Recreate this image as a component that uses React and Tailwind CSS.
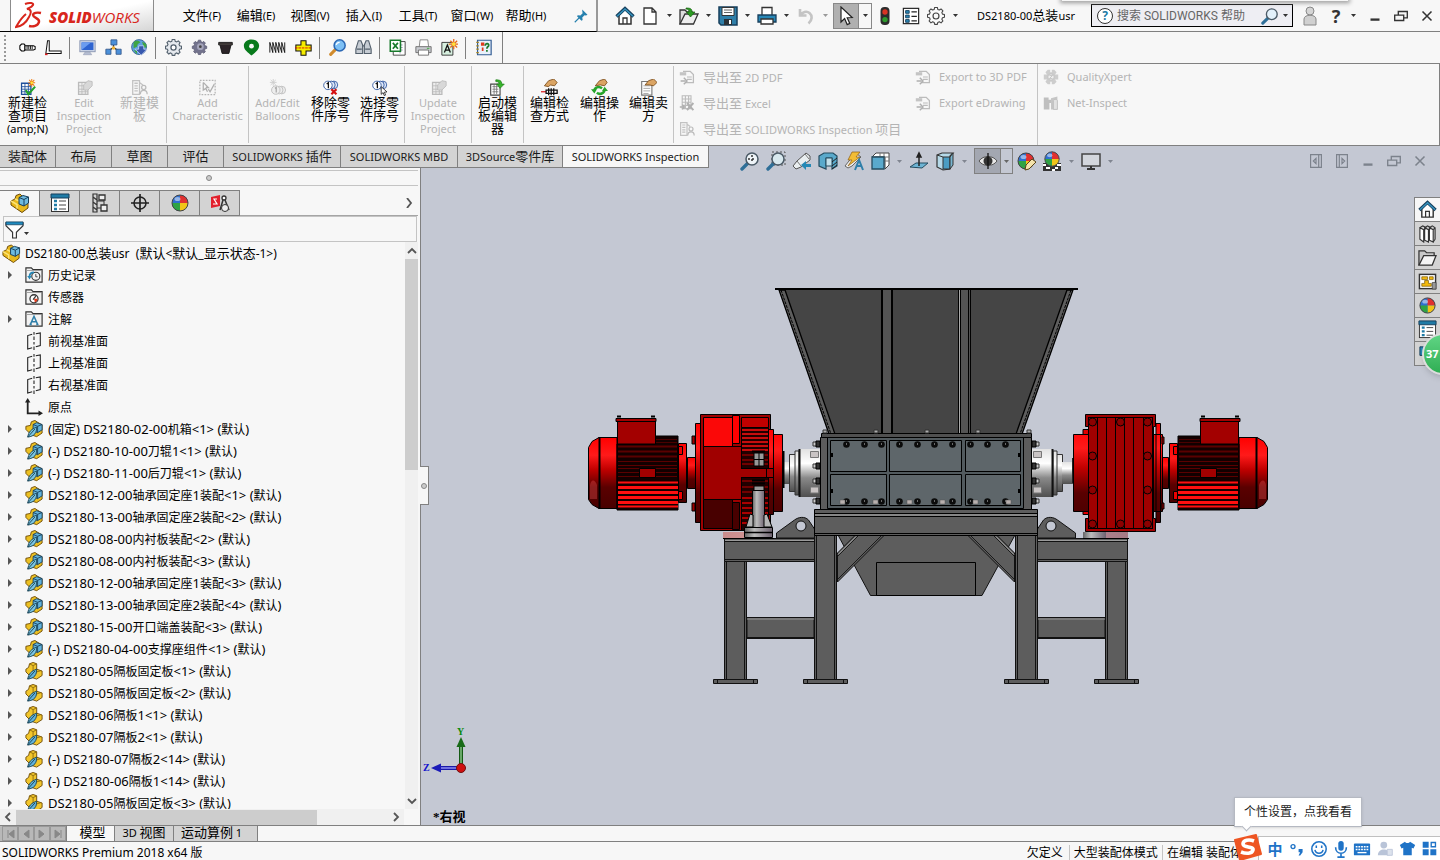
import { Fragment } from "react";
import clsx from "clsx";

const CJK = /([\u3000-\u9fff\uff00-\uffef]+)/;

// Chinese glyphs and latin letters use different sizes in the same label
function Mixed({ text, cjk = "text-[13px]" }) {
  return text.split(CJK).map((part, i) =>
    i % 2 ? (
      <span key={i} className={cjk}>{part}</span>
    ) : (
      <Fragment key={i}>{part}</Fragment>
    )
  );
}

function Svg({ size = 20, children, className }) {
  return (
    <svg width={size} height={size} viewBox="0 0 20 20" fill="none" className={clsx("shrink-0", className)} aria-hidden="true">
      {children}
    </svg>
  );
}

function Caret({ color = "#333" }) {
  return (
    <svg width="5" height="3" viewBox="0 0 5 3" className="shrink-0" aria-hidden="true">
      <path d="M0 0h5L2.5 3z" fill={color} />
    </svg>
  );
}

/* ---------- icons ---------- */

const gearTeeth = "M8.5 1.5h3l.5 2.2 1.7.7 1.9-1.2 2.1 2.1-1.2 1.9.7 1.7 2.2.5v3l-2.2.5-.7 1.7 1.2 1.9-2.1 2.1-1.9-1.2-1.7.7-.5 2.2h-3L8 18.1l-1.7-.7-1.9 1.2-2.1-2.1 1.2-1.9-.7-1.7L.6 12.4v-3l2.2-.5.7-1.7-1.2-1.9 2.1-2.1 1.9 1.2 1.7-.7z";

const Ball = () => (
  <>
    <circle cx="10" cy="10" r="8" fill="#2f6fd0" />
    <path d="M10 10V2a8 8 0 0 1 8 8z" fill="#e03030" />
    <path d="M10 10h8a8 8 0 0 1-8 8z" fill="#f0c419" />
    <path d="M10 10v8a8 8 0 0 1-8-8z" fill="#2fa344" />
    <circle cx="10" cy="10" r="8" stroke="#444" strokeWidth="1" />
    <ellipse cx="7.5" cy="6" rx="3" ry="2" fill="#fff" opacity=".5" />
  </>
);

const House = () => (
  <>
    <path d="M4 9v9h12V9l-6-6z" fill="#fff" stroke="#333" strokeWidth="1.5" />
    <path d="M1.5 10.5L10 2.5l8.5 8" stroke="#173f5c" strokeWidth="3.4" />
    <path d="M2 10.3L10 2.9l8 7.4" stroke="#3592bd" strokeWidth="1.5" />
    <path d="M8 18v-6h4v6" stroke="#333" strokeWidth="1.3" />
  </>
);

const ListPane = () => (
  <>
    <rect x="1.5" y="1.5" width="17" height="17" fill="#fff" stroke="#333" />
    <path d="M1 1h18v4H1z" fill="#1f7ba6" stroke="#173f5c" />
    <path d="M4 8h3M4 12h3M4 16h3" stroke="#1f7ba6" strokeWidth="2.4" />
    <path d="M9 8h7M9 12h7M9 16h7" stroke="#444" />
  </>
);

const Lens = ({ fill = "#d8ecf8" }) => (
  <>
    <path d="M2 18l6-6" stroke="#2f6f98" strokeWidth="3.4" strokeLinecap="round" />
    <circle cx="12" cy="8" r="6" fill={fill} stroke="#4b5a66" strokeWidth="1.5" />
  </>
);

const FolderBack = () => (
  <>
    <path d="M1 18V2h6l2 2h10v14z" fill="#f2f2f2" stroke="#333" strokeWidth="1.3" />
    <path d="M1 5h17" stroke="#999" />
  </>
);

const Coins = () => (
  <>
    <circle cx="14" cy="7" r="4.5" fill="#dfe8f8" stroke="#27509c" />
    <circle cx="11" cy="7" r="4.5" fill="#dfe8f8" stroke="#27509c" />
    <circle cx="7" cy="7.5" r="5" fill="#fff" stroke="#27509c" />
    <path d="M5.5 6l2-1.5V11" stroke="#111" strokeWidth="1.5" />
  </>
);

const icons = {
  home: <House />,
  newDoc: <path d="M4 2h8l4 4v12H4zM12 2v4h4" fill="#fff" stroke="#333" strokeWidth="1.3" />,
  open: (
    <>
      <path d="M1 18V4h5l2 2h5v3" fill="#ddd" stroke="#333" strokeWidth="1.3" />
      <path d="M1 18L6 8h13l-4.500 10z" fill="#eee" stroke="#333" strokeWidth="1.3" />
      <path d="M7 2c5 0 6 1 6 4h3l-4.500 5L7.500 6H10c0-2-1-3-3-3z" fill="#2b9b22" stroke="#176010" strokeWidth=".7" />
    </>
  ),
  save: (
    <>
      <path d="M1 1h18v18H3l-2-2z" fill="#2f7fa9" stroke="#173f5c" strokeWidth="1.5" />
      <path d="M4 1.500h12v8H4z" fill="#fff" stroke="#333" />
      <path d="M6 4h8M6 6.500h8" stroke="#666" />
      <path d="M6 13h8v6H6z" fill="#2b3238" />
      <path d="M11 14h2v4h-2z" fill="#fff" />
    </>
  ),
  print: (
    <>
      <path d="M5 9V1.500h10V9" fill="#fff" stroke="#333" strokeWidth="1.3" />
      <path d="M1 9h18v7H1z" fill="#2787b6" stroke="#173f5c" strokeWidth="1.3" />
      <path d="M4 13h12v5H4z" fill="#fff" stroke="#333" strokeWidth="1.3" />
    </>
  ),
  undo: <path d="M4 3v6.500h6.500M4.500 9c2-3 6-4.500 9-2s3 7-1 10.500" stroke="#c4c4c4" strokeWidth="2.6" />,
  cursor: <path d="M5 1v15l3.600-3.400 2.600 6 2.600-1.200-2.600-5.700 5-.2z" fill="#fff" stroke="#222" strokeWidth="1.2" />,
  light: (
    <>
      <rect x="5" y="0" width="10" height="20" rx="4.5" fill="#2c2c2c" />
      <circle cx="10" cy="5.500" r="3" fill="#d93423" />
      <circle cx="10" cy="14" r="3" fill="#2d9a2c" />
    </>
  ),
  options: (
    <>
      <rect x="1.5" y="1.5" width="17" height="17" fill="#fff" stroke="#222" strokeWidth="1.3" />
      <path d="M4 4h4v3H4zM4 9h4v3H4zM4 14h4v3H4z" fill="#2787b6" stroke="#173f5c" />
      <path d="M10.500 5.500h6M10.500 10.500h6M10.500 15.500h6" stroke="#222" strokeWidth="1.3" />
    </>
  ),
  gear: (
    <>
      <path d={gearTeeth} transform="translate(0 -1)" fill="#fafafa" stroke="#444" strokeWidth="1.2" strokeLinejoin="round" />
      <circle cx="10" cy="10" r="3.3" stroke="#444" strokeWidth="1.3" />
    </>
  ),
  gearGray: (
    <>
      <path d={gearTeeth} transform="translate(0 -1)" fill="#e5e9ee" stroke="#53606d" strokeWidth="1.3" />
      <circle cx="10" cy="10" r="3" fill="#fff" stroke="#53606d" strokeWidth="1.5" />
    </>
  ),
  gearDark: (
    <>
      <path d={gearTeeth} transform="translate(1 0) scale(.9)" fill="#73738d" stroke="#5a5a72" />
      <circle cx="11" cy="9" r="4" fill="#a4a4ba" />
      <circle cx="11" cy="9" r="1.6" fill="#444" />
    </>
  ),
  screw: (
    <>
      <path d="M3 6h3l1 1v6l-1 1H3l-2-2V8z" fill="#fff" stroke="#000" strokeWidth="1.2" />
      <path d="M7 8h10l2 1v3l-2 1H7z" fill="#fff" stroke="#000" strokeWidth="1.2" />
      <path d="M9.500 8v4M11.500 8v4M13.500 8v4M15.500 8v4" stroke="#000" />
    </>
  ),
  profile: (
    <>
      <path d="M3 2h2v12h14v3H1z" fill="#fff" stroke="#111" strokeWidth="1.2" />
      <path d="M0 18h3" stroke="#d22" strokeWidth="2" />
    </>
  ),
  monitor: (
    <>
      <rect x="1" y="2" width="18" height="13" fill="#cdd5e6" stroke="#8390ad" />
      <path d="M3 4h14v9H3z" fill="#2e63d0" />
      <path d="M3 13l11-9H3z" fill="#6b9cf0" />
      <path d="M5 18.500h10l-2-3H7z" fill="#b4bdd2" stroke="#8a94ad" strokeWidth=".6" />
    </>
  ),
  network: (
    <>
      <path d="M10 6v5M4 14l6-4 6 4" stroke="#333" strokeWidth="1.5" />
      <path d="M7 1h7v6H7zM1 12h6v6H1zM13 12h6v6h-6z" fill="#4a90da" stroke="#36588a" />
      <circle cx="10" cy="10.5" r="2" fill="#f2b233" />
    </>
  ),
  globe: (
    <>
      <circle cx="9.500" cy="9.500" r="8.800" fill="#5fa0e0" stroke="#335f91" />
      <path d="M3 4c3-3 7-2 8 0l-3 2-1 3-4 2zM13 3l5 3v4h-3zM3 13l4 1v4z" fill="#3fa544" />
      <path d="M9 8h6v4h4l-7 7-7-7h4z" fill="#3758ae" stroke="#dbe6fb" strokeWidth=".8" />
    </>
  ),
  belt: (
    <>
      <path d="M2 4h16v3h-1.500l-2.500 10H6L3.500 7H2z" fill="#2c2428" stroke="#111" />
      <path d="M2 6h16" stroke="#776" strokeWidth=".6" />
    </>
  ),
  pin: (
    <>
      <path d="M10 .5c5 0 9 3 9 7.500 0 5-5 8-9 11.500C6 16 1 13 1 8 1 3.500 5 .5 10 .5z" fill="#087a1c" />
      <circle cx="10" cy="8.500" r="2.800" fill="#f7f7f7" />
    </>
  ),
  spring: <path d="M1 16V4l3.500 12V4L8 16V4l3.500 12V4L15 16V4l3.500 12V4" stroke="#111" strokeWidth="1.1" />,
  cross: (
    <>
      <path d="M7 2h6v5h6v7h-6v5H7v-5H1V7h6z" fill="#f5ec00" stroke="#111" strokeWidth="1.2" />
      <path d="M0 10.500h20" stroke="#d00" strokeDasharray="3 1" />
    </>
  ),
  lensBlue: (
    <>
      <path d="M2 18l6-6" stroke="#d08b2d" strokeWidth="3.600" strokeLinecap="round" />
      <circle cx="12.500" cy="7.500" r="6.500" fill="#7dc0f5" stroke="#2c68b4" strokeWidth="1.8" />
      <path d="M8.500 7c.5-2 2-3 4-3" stroke="#fff" strokeWidth="1.5" />
    </>
  ),
  bino: (
    <>
      <path d="M4 2h3l2 5v10H1v-5zM16 2h-3l-2 5v10h8v-5z" fill="#c6ccd3" stroke="#525e6b" strokeWidth="1.3" />
      <path d="M2 12h6M12 12h6M9 8h2" stroke="#525e6b" strokeWidth="1.5" />
    </>
  ),
  excel: (
    <>
      <path d="M5 3h14v16H5z" fill="#fff" stroke="#333" />
      <path d="M10 7h6M10 10h6M10 13h6M13 4v13" stroke="#88a" />
      <path d="M1.500 1.500h12v13h-12z" fill="#fff" stroke="#187a2c" strokeWidth="1.8" />
      <path d="M4.500 4.500l6 7M10.500 4.500l-6 7" stroke="#187a2c" strokeWidth="2" />
    </>
  ),
  printer: (
    <>
      <path d="M5 9l1-8h9l1 8" fill="#fff" stroke="#777" />
      <path d="M1 9h18v7H1z" fill="#c9cbd0" stroke="#666" />
      <path d="M4 13h12v6H4z" fill="#fff" stroke="#666" />
      <path d="M14 11h3" stroke="#3a3" />
    </>
  ),
  noteStar: (
    <>
      <path d="M1 4h13v15H1z" fill="#d6efdf" stroke="#222" />
      <path d="M4 16l3.500-9L11 16M5.500 13h4" stroke="#111" strokeWidth="1.5" />
      <path d="M15 0v12M9 6h11M11 2l8 8M19 2l-8 8" stroke="#e86818" strokeWidth="1.5" />
      <circle cx="15" cy="6" r="2.200" fill="#ffe23a" />
    </>
  ),
  check: (
    <>
      <path d="M3 1.500h16v17H3z" fill="#e9f1fb" stroke="#325d94" strokeWidth="1.4" />
      <path d="M1.500 4h3M1.500 8h3M1.500 12h3M1.500 16h3" stroke="#a78421" strokeWidth="1.5" />
      <path d="M7 4h4v4H7zM8 10h2v4H8z" fill="#e03a1c" />
      <path d="M12 8c0-4 5-3 4 0-.5 1-2 1-2 3.500M14 13v2" stroke="#1c7a2b" strokeWidth="2" />
    </>
  ),
  grid: (
    <>
      <path d="M3 5h11v13H3z" fill="#fff" stroke="#1f4f9b" strokeWidth="1.5" />
      <path d="M3 9h11M3 12h11M3 15h11M7 5v13M11 5v13" stroke="#1f4f9b" />
      <path d="M8 13l3 5 8-9" stroke="#22a12c" strokeWidth="2.4" />
      <path d="M15 0v9M11 4.500h8M12 1l6 7M18 1l-6 7" stroke="#ef7d15" strokeWidth="1.2" />
      <circle cx="15" cy="4.500" r="1.600" fill="#ffe23a" />
    </>
  ),
  gridGray: (
    <>
      <path d="M3 4h11v14H3z" fill="#eee" stroke="#bbb" strokeWidth="1.5" />
      <path d="M3 8h11M3 12h11M3 15h11M7 4v14M11 4v14" stroke="#bbb" />
      <path d="M9 13V7l5-5 5 1v5l-5 5z" fill="#d8d8d8" stroke="#bbb" />
    </>
  ),
  peopleGray: (
    <>
      <path d="M2 2h8v16H2zM4 5h4M4 8h4M4 11h4M4 14h4M10 4l4 3" stroke="#c2c2c2" strokeWidth="1.5" />
      <circle cx="15" cy="10" r="2.5" stroke="#bbb" strokeWidth="1.5" />
      <path d="M11 18c0-6 8-6 8 0" stroke="#bbb" strokeWidth="1.5" />
    </>
  ),
  charGray: (
    <>
      <rect x="1" y="1.5" width="18" height="17" stroke="#b5b5b5" strokeWidth="1.5" strokeDasharray="2 1.5" />
      <path d="M5 4v9l3-2 2 4M5 4l6 6H8M11 12l2 3 5-9" stroke="#b0b0b0" strokeWidth="1.5" />
    </>
  ),
  balloonGray: (
    <>
      <path d="M5 0v8M1 4h8M2 1l6 6M8 1L2 7" stroke="#ccc" />
      <circle cx="15" cy="13" r="4.500" fill="#eee" stroke="#bbb" />
      <circle cx="12" cy="13" r="4.500" fill="#eee" stroke="#bbb" />
      <circle cx="8" cy="13" r="5" fill="#eee" stroke="#bbb" />
      <path d="M7 11l1.500-1v6" stroke="#aaa" strokeWidth="1.5" />
    </>
  ),
  balloonDel: (
    <>
      <Coins />
      <path d="M11 12l6 6M17 12l-6 6" stroke="#d41111" strokeWidth="2.6" />
    </>
  ),
  balloonSel: (
    <>
      <Coins />
      <path d="M12 9v9l2.300-2 1.300 3.500 1.500-.6-1.300-3.400 3-.3z" fill="#fff" stroke="#222" />
    </>
  ),
  launch: (
    <>
      <path d="M2 6h11v13H2z" fill="#fff" stroke="#444" strokeWidth="1.3" />
      <path d="M4 9h7M4 12h7M4 15h7M6 7v11M9 7v11" stroke="#777" />
      <path d="M8 1c5 0 7 1 7 5h3l-5 5-4-5h3c0-2-1-3-4-3z" fill="#38b52c" stroke="#1a7a14" strokeWidth=".8" />
    </>
  ),
  handProbe: (
    <>
      <path d="M4 8l5-6 6-2 4 4-3 4-5-1-2 2z" fill="#dba564" stroke="#7a4b1a" />
      <path d="M0 15h6" stroke="#d22" strokeWidth="1.5" />
      <path d="M6 13h13v4H6zM9 11v8M12 11v8M15 11v8" fill="#fff" stroke="#111" strokeWidth="1.5" />
    </>
  ),
  handCycle: (
    <>
      <path d="M4 14c0-4 5-6 9-3M16 12c0 5-6 7-9 4" stroke="#26a52a" strokeWidth="3" />
      <path d="M0 12h7l-3 5zM20 14h-7l3-5z" fill="#26a52a" />
      <path d="M5 8l5-6 6-2 3 4-3 4-5-1z" fill="#dba564" stroke="#7a4b1a" />
    </>
  ),
  handDoc: (
    <>
      <path d="M2 3h12v16H2z" fill="#fff" stroke="#777" strokeWidth="1.3" />
      <path d="M4 8h8M4 11h8M4 14h8M4 17h6" stroke="#999" />
      <path d="M6 7l4-5 6-2 4 4-4 4-5-1z" fill="#dba564" stroke="#7a4b1a" />
    </>
  ),
  exportGray: (
    <>
      <path d="M5 3h9l4 4v10H8" stroke="#bcbcbc" strokeWidth="1.600" />
      <path d="M1 4h8v4H1z" fill="#c4c4c4" />
      <path d="M10 10h6M10 13h6" stroke="#bcbcbc" strokeWidth="1.400" />
      <path d="M2 15h6M6 11l4 4-4 4" stroke="#b0b0b0" strokeWidth="1.800" />
    </>
  ),
  excelGray: (
    <>
      <path d="M4 1h11v16H4zM4 5h11M4 9h11M4 13h11M8 1v16M12 1v16" stroke="#bcbcbc" strokeWidth="1.400" />
      <path d="M10 10l8 9M18 10l-8 9" stroke="#b0b0b0" strokeWidth="2.4" />
      <path d="M1 15h6M4 12l3 3-3 3" stroke="#b0b0b0" strokeWidth="1.600" />
    </>
  ),
  qualityGray: (
    <>
      <path d="M3 4l3-3h3v3h2V1h3l3 3-2 3h4v6h-4l2 3-3 3h-3v-3H9v3H6l-3-3 2-3H1V7h4z" fill="#cdcdcd" />
      <circle cx="10" cy="10" r="4" fill="#eee" stroke="#bbb" />
      <path d="M8 8h4l-4 4h4" stroke="#bbb" />
    </>
  ),
  netGray: (
    <>
      <path d="M1 3h6v3h4v4H8v8H1z" fill="#bfbfbf" />
      <path d="M10 4l8-2v16h-8z" fill="#c6c6c6" />
      <path d="M13 7c0-2 5-2 5 0v11h-5z" fill="#e2e2e2" stroke="#bbb" />
    </>
  ),
  zoomFit: (
    <>
      <Lens fill="#eef4f8" />
      <path d="M12 4v8M8 8h8" stroke="#333" strokeDasharray="2 2" strokeWidth="1.5" />
    </>
  ),
  zoomArea: (
    <>
      <rect x="6" y="1" width="13" height="13" stroke="#555" strokeDasharray="2 2" />
      <Lens fill="#d8e8ee" />
    </>
  ),
  prevView: (
    <>
      <path d="M1 15l4-5 9-8 4 3v4l-9 7-5 2z" fill="#e9eef0" stroke="#555" />
      <path d="M13 3l4 5M5 10l4 5" stroke="#777" />
      <path d="M19 16h-5v3l-5-5 5-4v3h5z" fill="#2588b5" />
    </>
  ),
  section: (
    <>
      <path d="M1 5l5-3h9l4 3v10l-5 3V7H8v11l-7-3z" fill="#59a9cb" stroke="#254c60" strokeWidth="1.2" />
      <path d="M8 7h6v8H8z" fill="#c3e0ea" stroke="#254c60" />
      <path d="M14 11l5-4M14 15l5-4M14 18l5-4" stroke="#222" />
    </>
  ),
  annot: (
    <>
      <path d="M1 15l4-5 8-7 4 3-9 9-4 2z" fill="#eee" stroke="#666" />
      <path d="M8 1h8l-4 5h4L4 15l4-6H4z" fill="#f2bd35" stroke="#8d5b12" strokeWidth=".7" />
      <path d="M11 19l4-10 4 10M12.500 15h5" stroke="#2f7fa9" strokeWidth="2" />
    </>
  ),
  cube: (
    <>
      <path d="M6 2h13v12l-4 4V6H2l4-4z" fill="#fff" stroke="#444" />
      <path d="M10 2v12M14 2v12M6 6h13M6 10h13" stroke="#777" />
      <path d="M2 6h12v12H2z" fill="#5aa9cc" stroke="#254c60" strokeWidth="1.3" />
    </>
  ),
  plane: (
    <>
      <path d="M1 16l6-4h12l-6 5z" fill="#6db4d4" stroke="#254c60" />
      <path d="M10 15V5M8 6l2-4 2 4z" fill="#222" stroke="#222" strokeWidth="1.5" />
    </>
  ),
  box3d: (
    <>
      <path d="M2 4l5-2h11l-3 3v13L8 19l-6-3z" fill="#b5d9e8" stroke="#333" strokeWidth="1.2" />
      <path d="M8 6h7v12H8z" fill="#4a9dc3" stroke="#333" />
      <path d="M15 6l3-4v12l-3 4z" fill="#78b6d1" stroke="#333" />
      <path d="M2 4l6 2" stroke="#333" />
    </>
  ),
  eye: (
    <>
      <path d="M1 10c4-6 14-6 18 0-4 6-14 6-18 0z" fill="#e8e8e8" stroke="#555" />
      <circle cx="10" cy="10" r="4.500" fill="#333" />
      <path d="M10 2v16" stroke="#111" strokeWidth="1.3" />
    </>
  ),
  ballPencil: (
    <>
      <Ball />
      <path d="M9 19l1-5 6-6 4 3-7 7z" fill="#f4e3ac" stroke="#5a4316" />
    </>
  ),
  ballScene: (
    <>
      <path d="M1 12h18v8H1z" fill="#333" />
      <path d="M1 14h3M4 17h4M10 19h3M15 14h4M13 17h3" stroke="#fff" strokeWidth="2" />
      <g transform="translate(1 -1) scale(.9)"><Ball /></g>
    </>
  ),
  ball: <Ball />,
  screen: (
    <>
      <rect x="1" y="3" width="18" height="12" fill="#d3d6dc" stroke="#444" strokeWidth="1.5" />
      <path d="M10 15v3M6 18h8" stroke="#333" strokeWidth="2" />
    </>
  ),
  paneLeft: <path d="M4 3h12v14H4zM13 3v14M10 7l-3 3 3 3z" stroke="#7c828c" strokeWidth="1.3" />,
  paneRight: <path d="M4 3h12v14H4zM7 3v14M10 7l3 3-3 3z" stroke="#7c828c" strokeWidth="1.3" />,
  min: <path d="M5 14h10" stroke="currentColor" strokeWidth="2.6" />,
  restore: <path d="M3 9h10v6H3zM7 9V5h10v7h-4" stroke="currentColor" strokeWidth="1.5" />,
  close: <path d="M5 5l10 10M15 5L5 15" stroke="currentColor" strokeWidth="1.7" />,
  asm: (
    <>
      <path d="M1 8l4-2 1-3.500 4-1.500 2 2v4l6 3v5l-6 4.500L1 12z" fill="#e9b91c" stroke="#6d4a05" />
      <path d="M1 8l6 3.500v4M5 6l4 2" stroke="#fbe377" strokeWidth="1.5" />
      <path d="M9 4.500l4-2 5.500 1.500v6L14 13l-5-2z" fill="#6fbbe0" stroke="#173f5c" />
      <path d="M9 4.500l5 2 4.500-2.500M14 6.500V13" stroke="#173f5c" />
    </>
  ),
  funnel: (
    <>
      <path d="M1 3h18v3l-7 7v6H8v-6L1 6z" fill="#fff" stroke="#333" strokeWidth="1.2" />
      <path d="M1 2h18v3H1z" fill="#1f8bbf" stroke="#173f5c" strokeWidth=".8" />
    </>
  ),
  list: <ListPane />,
  config: (
    <>
      <path d="M3 1h4v18H3zM3 4l4 3M3 9l4 3M3 14l4 3" stroke="#333" strokeWidth="1.2" />
      <path d="M7 8h7M7 15h4M14 6v6" stroke="#333" />
      <path d="M9 2h6v5H9zM11 12h6v6h-6z" fill="#eee" stroke="#333" strokeWidth="1.3" />
    </>
  ),
  target: (
    <>
      <circle cx="10" cy="10" r="6" stroke="#222" strokeWidth="1.5" />
      <path d="M10 1v18M1 10h18" stroke="#222" strokeWidth="1.7" />
    </>
  ),
  inspect: (
    <>
      <path d="M1 4l9-2v11l-9 2z" fill="#e2202c" />
      <path d="M7 6H4l3 5H3" stroke="#fff" strokeWidth="1.2" />
      <circle cx="14" cy="5" r="2" fill="#fff" stroke="#333" strokeWidth="1.3" />
      <path d="M13 7l-3 10M15 7l4 10" stroke="#333" strokeWidth="1.5" />
      <circle cx="15" cy="15" r="3.500" fill="#eee" stroke="#333" />
    </>
  ),
  books: (
    <>
      <path d="M2 4l4 2v13l-4-3zM7 4l4 2v13l-4-2zM12 4l4 2v13l-4-2z" fill="#fff" stroke="#333" strokeWidth="1.2" />
      <path d="M2 4l3-2 4 2M7 4l3-2 4 2M12 4l3-2 3 2v12l-2 3M6 6l2-1M11 6l2-1M16 6l2-2" stroke="#333" strokeWidth="1.2" />
    </>
  ),
  folder: (
    <>
      <path d="M1 18V3h6l2 2h8v4" fill="#c8c8c8" stroke="#333" strokeWidth="1.3" />
      <path d="M1 18L6 8h13l-4 10z" fill="#f5f5f5" stroke="#333" strokeWidth="1.3" />
    </>
  ),
  palette: (
    <>
      <rect x="1.5" y="2.5" width="17" height="15" fill="#fff" stroke="#333" strokeWidth="1.5" />
      <path d="M4 5h6v3H4zM12 5h4v3h-4zM7 9h4v3h3v3H4v-3h3z" fill="#f2b90c" stroke="#735300" strokeWidth=".7" />
      <path d="M15 11h4v7h-4z" fill="#999" stroke="#333" strokeWidth=".7" />
    </>
  ),
  chat: <path d="M2 3h13v9H9l-3 4v-4H2z" fill="#2787b6" stroke="#173f5c" />,
  history: (
    <>
      <FolderBack />
      <circle cx="12" cy="11.500" r="4.500" stroke="#333" strokeWidth="1.2" />
      <path d="M12 9v3h2" stroke="#333" />
      <path d="M10 7c-4 0-5 3-5 5" stroke="#2787b6" strokeWidth="2" />
      <path d="M2.500 11h5L5 15z" fill="#2787b6" />
    </>
  ),
  sensor: (
    <>
      <FolderBack />
      <circle cx="10" cy="12" r="4.500" fill="#fff" stroke="#333" strokeWidth="1.4" />
      <path d="M10 12h4a4 4 0 0 1-3 4z" fill="#e33b1c" />
      <path d="M9 13l3-4" stroke="#333" strokeWidth="1.3" />
    </>
  ),
  note: (
    <>
      <FolderBack />
      <path d="M6 16l4-9 4 9M7.500 13h5M5 16h2.500M12.500 16H15" stroke="#2f7fa9" strokeWidth="1.7" />
    </>
  ),
  refPlane: (
    <path d="M8 2.500L3 4v15l5-1.500M12 2l5-1v14l-5 1.500M10 0v3M10 5v4M10 11v3M10 16v4" stroke="#222" strokeWidth="1.2" />
  ),
  origin: (
    <>
      <path d="M3 3v14h14" stroke="#222" strokeWidth="2" />
      <path d="M0 5l3-5 3 5zM15 14l5 3-5 3z" fill="#222" />
    </>
  ),
  subAsm: (
    <>
      <path d="M1 7l5-1 1-4 4-1.500 3 2 5 3v9l-6 4-6-2-6-6z" fill="#ecc021" stroke="#6d4a05" />
      <path d="M9 5l4-2 6 2v6l-5 3-5-2z" fill="#63b3dc" stroke="#173f5c" />
      <path d="M9 5l5 2 5-2M14 7v7" stroke="#173f5c" />
      <path d="M3 19c1-6 4-9 10-11 0 6-2 10-10 11z" fill="#7cc5e2" stroke="#143f52" />
      <path d="M3 19l8-9" stroke="#143f52" />
    </>
  ),
  part: (
    <>
      <path d="M1 8l3-2 1-4 4-1.500 4 1.500v6l6 2v5l-6 4-6-2-6-6z" fill="#f2c62b" stroke="#6d4a05" />
      <path d="M5 2l4 2 4-2M9 4v6M13 11l5-1.500" stroke="#8a6a10" />
      <path d="M3 19c1-6 4-9 10-11 0 6-2 10-10 11z" fill="#63b3dc" stroke="#143f52" />
      <path d="M3 19l8-9" stroke="#143f52" />
    </>
  ),
};

function IconButton({ name, label, size = 20, className }) {
  return (
    <button type="button" aria-label={label ?? name} className={clsx("flex shrink-0 items-center justify-center", className)}>
      <Svg size={size}>{icons[name]}</Svg>
    </button>
  );
}

/* ---------- title bar ---------- */

const menus = ["文件(F)", "编辑(E)", "视图(V)", "插入(I)", "工具(T)", "窗口(W)", "帮助(H)"];

function Logo() {
  return (
    <div className="flex h-[31px] w-[144px] items-center gap-[6px] border-x border-[#8c8c8c] bg-linear-to-br from-white via-white to-[#d6d6d6] pl-1 text-[#d8261c]">
      <svg width="28" height="28" viewBox="0 0 28 28" fill="none" stroke="#d8261c" aria-hidden="true">
        <path d="M10 3c5-2 9-1 8 1-1 2-4 3-6 4 4 0 5 3 2 8-2 4-6 9-13 10 3-5 5-9 10-13" strokeWidth="2" />
        <path d="M26 12c-4-1-8 0-8 2 0 3 7 3 6 7-1 4-6 5-10 4" strokeWidth="2.4" />
      </svg>
      <span className="mt-1 font-['Open_Sans'] text-[15px] leading-none whitespace-nowrap italic">
        <b className="font-extrabold">SOLID</b>WORKS
      </span>
    </div>
  );
}

function TitleBar() {
  return (
    <header className="relative flex h-8 shrink-0 items-center border-b border-[#808080] bg-[#f7f7f7]">
      <div className="flex h-8 w-[598px] shrink-0 items-center border-r-2 border-b border-r-[#999] border-b-black pl-[10px]">
        <Logo />
        <nav className="ml-[21px] flex">
          {menus.map((m) => (
            <button key={m} type="button" className="w-[54px] text-center text-[11px] leading-5 whitespace-nowrap">
              <Mixed text={m} />
            </button>
          ))}
        </nav>
        <button type="button" aria-label="Pin" className="ml-[21px]">
          <Svg size={15}>
            <path d="M11 2l7 7-2 1-2-.5-3 3 .5 3.500-1.500 1-6-6 1-1.500 3.500.5 3-3L11 4z" fill="#2680ae" />
            <path d="M7 13l-6 6" stroke="#2680ae" strokeWidth="1.5" />
          </Svg>
        </button>
      </div>

      <div className="ml-[15px] flex items-center">
        <IconButton name="home" className="w-6" />
        {["newDoc", "open", "save", "print", "undo"].map((n) => (
          <div key={n} className="flex w-[39px] items-center gap-[7px] pl-[3px]">
            <IconButton name={n} label={n} />
            <Caret color={n === "undo" ? "#999" : "#333"} />
          </div>
        ))}
        <div className="ml-px flex h-[26px] w-[39px] items-center border border-[#888]">
          <IconButton name="cursor" className="h-full w-[25px] border-r border-[#888] bg-[#b0b0b0]" />
          <span className="flex flex-1 justify-center"><Caret /></span>
        </div>
        <IconButton name="light" className="w-[26px]" size={18} />
        <IconButton name="options" className="w-[26px]" size={18} />
        <IconButton name="gear" className="w-6" size={18} />
        <span className="ml-[5px]"><Caret /></span>
      </div>

      <div className="ml-auto flex items-center">
        <h1 className="mr-4 text-[11px] leading-5 whitespace-nowrap"><Mixed text="DS2180-00总装usr" /></h1>
        <label className="flex h-[23px] w-[202px] items-center border border-black bg-[#eeeef3] px-1">
          <span className="ml-px flex size-4 items-center justify-center rounded-full border border-[#333] bg-white text-[12px] leading-none font-bold text-[#1f7ba6]">?</span>
          <input
            aria-label="搜索"
            placeholder="搜索 SOLIDWORKS 帮助"
            className="ml-1 w-0 flex-1 bg-transparent font-['Roboto','Noto_Sans_CJK_SC',sans-serif] text-[12px] text-[#444] outline-none placeholder:text-[#666]"
          />
          <Svg size={18} className="mr-1"><Lens fill="#e3f1fb" /></Svg>
          <Caret />
        </label>
        <button type="button" aria-label="User" className="flex w-[34px] justify-center">
          <Svg size={20}>
            <circle cx="10" cy="5" r="4" fill="#d5d5d5" stroke="#888" />
            <path d="M4 19v-6c0-5 12-5 12 0v6z" fill="#d0d0d0" stroke="#888" />
          </Svg>
        </button>
        <button type="button" className="w-[18px] text-[18px] leading-none font-bold text-[#333]">?</button>
        <span className="mx-[6px]"><Caret /></span>
        <IconButton name="min" size={18} className="w-[26px] text-[#333]" />
        <IconButton name="restore" size={18} className="w-[26px] text-[#333]" />
        <IconButton name="close" size={18} className="w-[26px] text-[#333]" />
      </div>
      <div className="absolute top-0 right-[92px] h-px w-[286px] shadow-[0_0_4px_2px_#999]" />
    </header>
  );
}

/* ---------- add-in toolbar ---------- */

const toolGroups = [
  ["screw", "profile"],
  ["monitor", "network", "globe"],
  ["gearGray", "gearDark", "belt", "pin", "spring", "cross"],
  ["lensBlue", "bino"],
  ["excel", "printer", "noteStar"],
  ["check"],
];

function AddinBar() {
  return (
    <div className="flex h-8 shrink-0 border-b border-[#808080] bg-[#f7f7f7]">
      <div className="flex items-center border-r border-[#808080] pr-[6px] pl-1">
        <span className="mr-2 h-[26px] w-[2px] border-l-2 border-dotted border-[#999]" />
        {toolGroups.map((group, g) => (
          <Fragment key={g}>
            {g > 0 && <span className="mr-1 ml-[3px] h-[22px] w-px bg-[#808080]" />}
            {group.map((n) => (
              <IconButton key={n} name={n} size={17} className="w-[26px]" />
            ))}
          </Fragment>
        ))}
      </div>
    </div>
  );
}

/* ---------- ribbon ---------- */

const ribbon = [
  [
    { icon: "grid", lines: ["新建检", "查项目", "(amp;N)"], w: "w-[55px]" },
    { icon: "gridGray", lines: ["Edit", "Inspection", "Project"], w: "w-[58px]", off: true },
    { icon: "peopleGray", lines: ["新建模", "板"], w: "w-[53px]", off: true },
  ],
  [{ icon: "charGray", lines: ["Add", "Characteristic"], w: "w-[81px]", off: true }],
  [
    { icon: "balloonGray", lines: ["Add/Edit", "Balloons"], w: "w-[57px]", off: true },
    { icon: "balloonDel", lines: ["移除零", "件序号"], w: "w-[49px]" },
    { icon: "balloonSel", lines: ["选择零", "件序号"], w: "w-[49px]" },
  ],
  [{ icon: "gridGray", lines: ["Update", "Inspection", "Project"], w: "w-[66px]", off: true }],
  [{ icon: "launch", lines: ["启动模", "板编辑", "器"], w: "w-[51px]" }],
  [
    { icon: "handProbe", lines: ["编辑检", "查方式"], w: "w-[51px]" },
    { icon: "handCycle", lines: ["编辑操", "作"], w: "w-[49px]" },
    { icon: "handDoc", lines: ["编辑卖", "方"], w: "w-[49px]" },
  ],
];

const exportCols = [
  {
    w: "w-[236px]",
    items: [
      ["exportGray", "导出至 2D PDF"],
      ["excelGray", "导出至 Excel"],
      ["peopleGray", "导出至 SOLIDWORKS Inspection 项目"],
    ],
  },
  { w: "w-[127px]", items: [["exportGray", "Export to 3D PDF"], ["exportGray", "Export eDrawing"]] },
  { w: "w-[127px]", sep: true, items: [["qualityGray", "QualityXpert"], ["netGray", "Net-Inspect"]] },
];

function Ribbon() {
  return (
    <section className="flex h-[82px] shrink-0 border-r border-b border-[#808080] bg-[#f7f7f7]">
      {ribbon.map((group, g) => (
        <div key={g} className="my-[2px] flex border-r border-[#c4c4c4]">
          {group.map((b, i) => (
            <button
              key={i}
              type="button"
              disabled={b.off}
              className={clsx("flex flex-col items-center pt-[13px] text-[11px] leading-[13px]", b.w, b.off && "text-[#b4b4b4]")}
            >
              <Svg size={17}>{icons[b.icon]}</Svg>
              {b.lines.map((l) => (
                <span key={l} className="block h-[13px] whitespace-nowrap"><Mixed text={l} /></span>
              ))}
            </button>
          ))}
        </div>
      ))}
      {exportCols.map((col, c) => (
        <div key={c} className={clsx("flex flex-col", col.w, col.sep && "border-l border-[#c4c4c4]")}>
          {col.items.map(([icon, text]) => (
            <button key={text} type="button" disabled className="flex h-[26px] items-center gap-2 pl-[5px] text-[11px] whitespace-nowrap text-[#b4b4b4]">
              <Svg size={16}>{icons[icon]}</Svg>
              <span className="leading-5"><Mixed text={text} /></span>
            </button>
          ))}
        </div>
      ))}
    </section>
  );
}

const tabs = [
  ["装配体", "w-14"],
  ["布局", "w-14"],
  ["草图", "w-14"],
  ["评估", "w-14"],
  ["SOLIDWORKS 插件", "w-[117px]"],
  ["SOLIDWORKS MBD", "w-[117px]"],
  ["3DSource零件库", "w-[105px]"],
  ["SOLIDWORKS Inspection", "w-[146px]"],
];

function TabRow() {
  return (
    <div className="relative z-10 flex h-[22px] shrink-0 bg-[#c4c8d3]">
      <div className="flex" role="tablist">
        {tabs.map(([t, w], i) => {
          const active = i === tabs.length - 1;
          return (
            <button
              key={t}
              type="button"
              role="tab"
              aria-selected={active}
              className={clsx(
                "flex items-center justify-center border-r border-b border-[#808080] text-[11px] leading-5 whitespace-pre text-[#1a1a1a]",
                w,
                active ? "bg-[#f7f7f7]" : "bg-[#d3d3d3]"
              )}
            >
              <span><Mixed text={t} /></span>
            </button>
          );
        })}
      </div>
      <div className="mt-[2px] ml-7 flex h-[26px] flex-1 items-center pr-[7px]">
        {["zoomFit", "zoomArea", "prevView", "section", "annot", "cube"].map((n) => (
          <IconButton key={n} name={n} className="w-[26px]" />
        ))}
        <span className="mx-1"><Caret color="#808590" /></span>
        <IconButton name="plane" className="w-[26px]" />
        <IconButton name="box3d" className="w-[26px]" />
        <span className="mx-1"><Caret color="#808590" /></span>
        <div className="ml-[3px] flex h-[26px] w-[39px] items-center border border-[#808080]">
          <IconButton name="eye" className="h-full w-[26px] border-r border-[#808080] bg-[#a3a7b1]" />
          <span className="flex flex-1 justify-center"><Caret color="#666" /></span>
        </div>
        <IconButton name="ballPencil" className="w-[26px]" />
        <IconButton name="ballScene" className="w-[26px]" />
        <span className="mx-1"><Caret color="#808590" /></span>
        <IconButton name="screen" className="w-[26px]" />
        <span className="mx-1"><Caret color="#808590" /></span>
        <div className="ml-auto flex text-[#7c828c]">
          {["paneLeft", "paneRight", "min", "restore", "close"].map((n) => (
            <IconButton key={n} name={n} size={18} className="w-[26px]" />
          ))}
        </div>
      </div>
    </div>
  );
}

/* ---------- feature tree ---------- */

const tree = [
  ["history", "历史记录", true],
  ["sensor", "传感器", false],
  ["note", "注解", true],
  ["refPlane", "前视基准面", false],
  ["refPlane", "上视基准面", false],
  ["refPlane", "右视基准面", false],
  ["origin", "原点", false],
  ["subAsm", "(固定) DS2180-02-00机箱<1> (默认)", true],
  ["subAsm", "(-) DS2180-10-00刀辊1<1> (默认)", true],
  ["subAsm", "(-) DS2180-11-00后刀辊<1> (默认)", true],
  ["subAsm", "DS2180-12-00轴承固定座1装配<1> (默认)", true],
  ["subAsm", "DS2180-13-00轴承固定座2装配<2> (默认)", true],
  ["subAsm", "DS2180-08-00内衬板装配<2> (默认)", true],
  ["subAsm", "DS2180-08-00内衬板装配<3> (默认)", true],
  ["subAsm", "DS2180-12-00轴承固定座1装配<3> (默认)", true],
  ["subAsm", "DS2180-13-00轴承固定座2装配<4> (默认)", true],
  ["subAsm", "DS2180-15-00开口端盖装配<3> (默认)", true],
  ["subAsm", "(-) DS2180-04-00支撑座组件<1> (默认)", true],
  ["part", "DS2180-05隔板固定板<1> (默认)", true],
  ["part", "DS2180-05隔板固定板<2> (默认)", true],
  ["part", "DS2180-06隔板1<1> (默认)", true],
  ["part", "DS2180-07隔板2<1> (默认)", true],
  ["part", "(-) DS2180-07隔板2<14> (默认)", true],
  ["part", "(-) DS2180-06隔板1<14> (默认)", true],
  ["part", "DS2180-05隔板固定板<3> (默认)", true],
];

function Chevron({ d }) {
  return (
    <svg width="10" height="10" viewBox="0 0 10 10" fill="none" stroke="#555" strokeWidth="1.8" aria-hidden="true">
      <path d={d} />
    </svg>
  );
}

function FeaturePanel() {
  return (
    <aside className="relative flex w-[421px] shrink-0 flex-col border-r border-[#808080] bg-[#f7f7f7]">
      <div className="mt-[2px] mr-[2px] flex h-4 shrink-0 items-center justify-center border-y border-[#c4c4c4]">
        <span className="size-[6px] rounded-full border border-[#888] bg-[#ccc]" />
      </div>
      <div className="mt-1 mr-[2px] flex h-[26px] shrink-0 items-center border-b border-[#a5a5a5]">
        {["asm", "list", "config", "target", "ball", "inspect"].map((n, i) => (
          <IconButton
            key={n}
            name={n}
            className={clsx("h-[26px] w-10 border-t border-r border-[#808080]", i ? "border-b bg-[#d3d3d3]" : "bg-[#f7f7f7]")}
          />
        ))}
        <button type="button" aria-label="More" className="mr-1 ml-auto"><Chevron d="M3 0l4 5-4 5" /></button>
      </div>
      <div className="mr-[3px] ml-[3px] flex h-[26px] shrink-0 items-center border border-[#c4c4c4] pl-px">
        <Svg size={19}>{icons.funnel}</Svg>
        <span className="mt-2"><Caret /></span>
      </div>

      <div className="mr-[2px] flex min-h-0 flex-1">
        <div className="min-w-0 flex-1 overflow-hidden text-[13px] whitespace-pre text-black">
          <div className="flex h-[22px] items-center gap-1 pl-[2px]">
            <Svg size={19}>{icons.asm}</Svg>
            <span className="text-[12px] leading-5"><Mixed text="DS2180-00总装usr  (默认<默认_显示状态-1>)" /></span>
          </div>
          <ul>
            {tree.map(([icon, text, expandable]) => (
              <li key={text} className="flex h-[22px] items-center">
                <span className="w-[25px] pl-2">
                  {expandable && (
                    <svg width="4" height="8" viewBox="0 0 4 8" aria-hidden="true"><path d="M0 0l4 4-4 4z" fill="#555" /></svg>
                  )}
                </span>
                <Svg size={18}>{icons[icon]}</Svg>
                <span className="ml-[5px] leading-5"><Mixed text={text} cjk="text-[12px]" /></span>
              </li>
            ))}
          </ul>
        </div>
        <div className="flex w-[13px] flex-col items-center bg-[#f0f0f0]">
          <button type="button" aria-label="Scroll up" className="flex h-[17px] items-center"><Chevron d="M1 7l4-4 4 4" /></button>
          <div className="h-[211px] w-full bg-[#cdcdcd]" />
          <button type="button" aria-label="Scroll down" className="mt-auto flex h-[17px] items-center"><Chevron d="M1 3l4 4 4-4" /></button>
        </div>
      </div>
      <div className="mr-4 flex h-4 shrink-0 items-center bg-[#f0f0f0]">
        <button type="button" aria-label="Scroll left" className="flex w-4 justify-center"><Chevron d="M7 1L3 5l4 4" /></button>
        <div className="h-[15px] w-[301px] bg-[#cdcdcd]" />
        <button type="button" aria-label="Scroll right" className="ml-auto flex w-4 justify-center"><Chevron d="M3 1l4 4-4 4" /></button>
      </div>
      <div className="absolute top-[298px] left-[420px] z-10 flex h-[39px] w-[9px] items-center justify-center border border-l-0 border-[#808080] bg-[#f7f7f7]">
        <span className="size-[6px] rounded-full border border-[#888] bg-[#ccc]" />
      </div>
    </aside>
  );
}

/* ---------- model ---------- */

const boltX = [846, 864, 881, 899, 917, 934, 952, 970, 987, 1005];
const finsTop = [446, 451, 456, 461, 465, 468, 472, 476];
const finsLow = [482, 487, 492, 497, 502, 506];

function Motor() {
  return (
    <g stroke="#000">
      <path d="M617 437.500h-18l-7 4-3.500 6v52l3.500 5 7 4h18z" fill="url(#red)" />
      <path d="M599.500 437v72" strokeWidth="2" />
      <path d="M590 485c1-6 5-6 7 0v14h-7z" fill="#e55" stroke="none" opacity=".35" />
      <path d="M655 436h23v74h-61v-66h38z" fill="#120000" />
      {finsTop.map((y) => <path key={y} d={`M618 ${y}.5h59`} stroke="#740000" strokeWidth={y > 460 ? 1 : 2} opacity=".75" />)}
      <path d="M656 439.500h21M656 442.500h21" stroke="#4a0000" />
      {finsLow.map((y, i) => <path key={y} d={`M618 ${y}.5h60`} stroke="#ff1010" strokeWidth={i % 5 ? 3 : 2} />)}
      <path d="M617.500 421h38v23h-38z" fill="#a30000" />
      <path d="M616 418.500h40v3h-40z" fill="#a30000" />
      <path d="M617 416.500h4M651 416.500h4" strokeWidth="2" />
      <path d="M639.500 468.500h16v9h-16z" fill="#a30000" />
      <path d="M678.500 443.500h8v59h-8z" fill="url(#red)" />
      <path d="M678.500 446.500h4v8h-4zM678.500 491.500h4v8h-4z" fill="#e00" />
      <path d="M687.500 457.500h8v31h-8z" fill="url(#red)" />
    </g>
  );
}

function Bearing() {
  return (
    <g>
      <path d="M783 462h8v22h-8z" fill="url(#steel)" />
      <path d="M789.500 454.500h7v37h-7z" fill="url(#steel)" stroke="#333" />
      <path d="M795 451h4v44h-4z" fill="url(#steel)" stroke="#333" />
      <path d="M799 449h21v48h-21z" fill="url(#steel)" />
      <path d="M799.500 449v48" stroke="#111" strokeWidth="2" />
      {[444, 466, 481, 501].map((y) => (
        <g key={y}>
          <path d={`M813 ${y - 2}h4v4h-4z`} fill="#ccc" stroke="#333" />
          <path d={`M816 ${y - 3}h4v6h-4z`} fill="#333" stroke="#000" />
        </g>
      ))}
      <path d="M810.500 451.500h8v6h-8zM810.500 487h8v6h-8z" fill="#c9c4c4" stroke="#777" />
    </g>
  );
}

function FrameHalf() {
  return (
    <g fill="#5d5d5d" stroke="#111">
      <path d="M776.500 538v-5l18-13c4-3 10-4 14 0l6 9v9zM806 526a5 5 0 1 0-10 0 5 5 0 1 0 10 0z" fillRule="evenodd" />
      <path d="M747 617.500h67v21h-67z" />
      <path d="M747 619h67" stroke="#999" />
      <path d="M747 637.500h67" />
      <path d="M724.500 538.500h90v23h-90z" />
      <path d="M725 540.500h89" stroke="#9a9a9a" />
      <path d="M724 541.500h90M724 559.500h90" />
      <path d="M724.500 561.500h22v118h-22z" />
      <path d="M726.500 562v117M744.500 562v117" />
      <path d="M713.500 679.500h44v4h-44z" />
      <path d="M717.500 680v3M753.500 680v3" />
      <path d="M837.500 553l18-18h29l-47 47z" />
      <path d="M838 556l20-20M838 579l43-43" stroke="#1a1a1a" />
      <path d="M838 554.500l18-18" stroke="#aaa" />
      <path d="M814.500 535.500h22v144h-22z" />
      <path d="M816.500 536v143M834.500 536v143" />
      <path d="M803.500 679.500h44v4h-44z" />
      <path d="M807.500 680v3M843.500 680v3" />
    </g>
  );
}

function Model() {
  return (
    <svg width="701" height="433" viewBox="580 280 701 433" className="shrink-0" role="img" aria-label="DS2180-00">
      <defs>
        <linearGradient id="red" x1="0" y1="0" x2="0" y2="1">
          <stop offset="0" stopColor="#f00" />
          <stop offset=".25" stopColor="#ff1a1a" />
          <stop offset=".45" stopColor="#c00000" />
          <stop offset=".7" stopColor="#5a0000" />
          <stop offset="1" stopColor="#480000" />
        </linearGradient>
        <linearGradient id="steel" x1="0" y1="0" x2="0" y2="1">
          <stop offset="0" stopColor="#e2e2e2" />
          <stop offset=".3" stopColor="#fff" />
          <stop offset=".6" stopColor="#8a8a8a" />
          <stop offset="1" stopColor="#4f4f4f" />
        </linearGradient>
        <linearGradient id="post" x1="0" y1="0" x2="1" y2="0">
          <stop offset="0" stopColor="#666" />
          <stop offset=".35" stopColor="#bdbdbd" />
          <stop offset="1" stopColor="#6e6270" />
        </linearGradient>
        <linearGradient id="pink" x1="0" y1="0" x2="1" y2="0">
          <stop offset="0" stopColor="#c98c8c" />
          <stop offset=".4" stopColor="#f3c0c0" />
          <stop offset="1" stopColor="#a57a86" />
        </linearGradient>
      </defs>

      {/* hopper */}
      <path d="M779 290h294l-51 144H829z" fill="#454545" />
      <path d="M779 290h6l50 144h-6zM1067 290h6l-51 144h-6z" fill="#5e5e5e" stroke="#000" strokeWidth="1.3" />
      <path d="M781 290l50 144M1071 290l-51 144" stroke="#000" strokeDasharray="3 1" />
      <path d="M882 290h10v144h-10zM960 290h10v144h-10z" fill="#545454" />
      <path d="M882 290v144M892 290v144" stroke="#000" strokeWidth="2" />
      <path d="M958.500 290v144M960.500 290v144M968.500 290v144M970.500 290v144" stroke="#000" />
      <path d="M959.500 290v144" stroke="#aaa" />
      <path d="M775 289h303" stroke="#000" strokeWidth="2" />

      {/* chute and frame */}
      <path d="M838 535h177l-33 60.500H870.500z" fill="#5d5d5d" stroke="#111" />
      <path d="M876.500 562.500h99v33h-99z" fill="#5d5d5d" stroke="#000" />
      <FrameHalf />
      <g transform="translate(1852 0) scale(-1 1)"><FrameHalf /></g>
      <path d="M814.500 509.500h223v26h-223z" fill="#5d5d5d" stroke="#000" />
      <path d="M815 513.500h222M815 516.500h222M815 533.500h222" stroke="#000" />
      <path d="M815 515h222" stroke="#b0b0b0" />

      {/* pads under both gear boxes */}
      <path d="M723 532h21v6h-21zM1106 532h22v6h-22z" fill="url(#pink)" />
      <path d="M1083 532h23v6h-23z" fill="url(#post)" />
      <path d="M723 538.500h51M1083 538.500h46" stroke="#000" />

      <Bearing />
      <g transform="translate(1852 0) scale(-1 1)"><Bearing /></g>
      <path d="M1062 462h12v22h-12z" fill="url(#steel)" />
      <path d="M1072.500 458v25" stroke="#222" />

      {/* cutter box */}
      <path d="M820.500 437.500h211v72h-211z" fill="#5c5c5c" stroke="#000" />
      <path d="M821.500 433.500h210v4h-210z" fill="#505050" stroke="#000" />
      {[823, 874, 925, 976, 1027].map((x) => <path key={x} d={`M${x} 430h4v3h-4z`} fill="#aaa" stroke="#333" />)}
      <path d="M827.500 437.500h196v71h-196z" fill="#525a5e" stroke="#000" />
      <g fill="#5e666a" stroke="#000">
        <path d="M830.500 440.500h56v31h-56zM889.500 440.500h72v31h-72zM965.500 440.500h55v31h-55z" />
        <path d="M830.500 474.500h56v31h-56zM889.500 474.500h72v31h-72zM965.500 474.500h55v31h-55z" />
      </g>
      {boltX.map((x) => (
        <g key={x}>
          <circle cx={x + 0.5} cy="444.500" r="3.300" fill="#0b0b0b" />
          <circle cx={x + 0.5} cy="501.500" r="3.300" fill="#0b0b0b" />
          <path d={`M${x} 444h1M${x} 501h1`} stroke="#ccc" />
        </g>
      ))}
      {[840, 873, 907, 940, 973, 1006].map((x) => <path key={x} d={`M${x} 500h5v4h-5z`} fill="#b8b0ae" stroke="#555" strokeWidth=".5" />)}
      <path d="M832 453v4M832 489v4M1019 453v4M1019 489v4" stroke="#000" strokeWidth="2" />

      <Motor />
      <g transform="translate(1856 0) scale(-1 1)"><Motor /></g>

      {/* left gear box */}
      <g stroke="#000">
        <path d="M692 436h3v8h-3zM692 503h3v8h-3z" fill="#a00000" />
        <path d="M695.500 423.500h5v99h-5z" fill="url(#red)" />
        <path d="M700.500 414.500h70v116h-70z" fill="#a00000" />
        <path d="M703.500 417.500h29v29h-29z" fill="#fb0808" />
        <path d="M703.500 446.500h38v53h-38z" fill="#a00000" />
        <path d="M703.500 499.500h29v29h-29z" fill="#480000" />
        <path d="M732.500 415.500h7v28h-7z" fill="#f00" />
        <path d="M732.500 502.500h7v27h-7z" fill="#480000" />
        <path d="M741.500 427.500h27v103h-27z" fill="#220000" />
        <path d="M741.500 417.500h27v10h-27z" fill="#c00000" />
      </g>
      {[430, 434, 438, 442, 446, 450].map((y) => <path key={y} d={`M742 ${y}h26`} stroke="#ff1212" strokeWidth="1.5" />)}
      {[455, 460, 464, 481, 487, 492].map((y) => <path key={y} d={`M742 ${y}h26`} stroke="#8a0000" strokeWidth="1.5" />)}
      {[498, 503, 508, 513, 518, 523].map((y) => <path key={y} d={`M742 ${y}h26`} stroke="#d80000" strokeWidth="1.5" />)}
      <g stroke="#000">
        <path d="M768.500 429.500h5v85h-5zM773.500 434.500h9v77h-9z" fill="url(#red)" />
        <path d="M783.500 451v37" strokeWidth="2" />
        <path d="M740 468.500h33v9h-33z" fill="#a00000" stroke="none" />
        <path d="M741 468.500h32M741 477.500h32M766.500 468v9" />
        <path d="M754 453h10v13h-10zM754 486h10v6h-10z" fill="#999" />
        <path d="M754 459.500h10M759 453v13" />
        <path d="M752 451.500h13M752 480.500h13M752 483.500h13" strokeWidth="2" />
        <path d="M752.500 490.500h12v37h-12z" fill="url(#post)" />
        <path d="M746 527l4-13 3 1v12zM772 527l-5-13-3 1v12z" fill="#b5b5b5" />
        <path d="M744.500 527.500h28v10h-28z" fill="url(#post)" />
        <path d="M744 532.500h29" strokeWidth="1.5" />
      </g>

      {/* right gear box */}
      <g stroke="#000">
        <path d="M1083 429.500h6v85h-6z" fill="#e00000" />
        <path d="M1073.500 434.500h15v77h-15zM1156 423.500h4.500v99h-4.500zM1153.500 434.500h9v77h-9z" fill="url(#red)" />
        <path d="M1162 437h2v7h-2zM1162 503h2v6h-2z" fill="#a00000" />
        <path d="M1085.500 414.500h70v12h-2v92h2v13h-70v-13h3v-92h-3z" fill="#a00000" />
        <path d="M1088 417.500h65M1088 528.500h65M1088.500 418v110M1152.500 418v110" />
        <path d="M1097.500 418v110M1106.500 418v110M1115.500 418v110M1124.500 418v110M1133.500 418v110M1143.500 418v110" />
        {[[1092, 422], [1120, 422], [1147, 422], [1092, 456], [1147, 456], [1092, 490], [1147, 490], [1092, 524], [1120, 524], [1147, 524]].map(([x, y]) => (
          <circle key={`${x}-${y}`} cx={x + 0.5} cy={y} r="4" fill="#8c0000" />
        ))}
      </g>
    </svg>
  );
}

const paneButtons = ["home", "books", "folder", "palette", "ball", "list", "chat"];

function Viewport() {
  return (
    <main className="relative flex min-w-0 flex-1 items-center justify-center overflow-hidden bg-[#c4c8d3]">
      <Model />
      <svg width="48" height="54" viewBox="0 0 48 54" className="absolute bottom-[46px] left-[2px]" aria-label="Axes">
        <text x="34" y="10" fontFamily="Liberation Serif" fontSize="10" fontWeight="700" fill="#0a8a0a">Y</text>
        <text x="0" y="46" fontFamily="Liberation Serif" fontSize="10" fontWeight="700" fill="#11c">Z</text>
        <path d="M36.500 20h3v22h-3z" fill="#68a868" stroke="#145a14" />
        <path d="M33.500 22l4.500-10 4.500 10z" fill="#186b18" />
        <path d="M16 41.500h20v3H16z" fill="#7070e0" stroke="#1a1aa8" />
        <path d="M18 38.500L8 43l10 4.500z" fill="#1b1bb8" />
        <circle cx="38" cy="43" r="4.500" fill="#d01010" stroke="#701010" />
      </svg>
      <p className="absolute bottom-0 left-3 font-['Liberation_Serif','Noto_Sans_CJK_SC',serif] text-[13px] leading-4 font-bold">*右视</p>
      <div className="absolute top-[29px] right-0 flex w-[26px] flex-col border-t border-l border-[#808080]">
        {paneButtons.map((n, i) => (
          <IconButton key={n} name={n} size={19} className={clsx("h-6 w-full border-b border-[#808080]", i ? "bg-[#d3d3d3]" : "bg-[#f7f7f7]")} />
        ))}
      </div>
      <div className="absolute top-[165px] -right-6 flex size-[42px] items-center rounded-full border-2 border-[#ddd] bg-linear-to-b from-[#5fd584] to-[#2fae54] pl-[2px] text-[11px] font-bold text-white shadow-md">37</div>
    </main>
  );
}

/* ---------- bottom ---------- */

function BottomTabs() {
  return (
    <div className="flex h-[17px] shrink-0 border-y border-[#808080] bg-[#f7f7f7] text-[11px] leading-[13px]">
      <div className="flex w-[67px] border-r border-[#808080] bg-[#b8b8b8] pl-[2px]">
        {["M3 1v8M9 1L4 5l5 4z", "M8 1L3 5l5 4z", "M2 1l5 4-5 4z", "M2 1l5 4-5 4zM8 1v8"].map((d, i) => (
          <button key={i} type="button" aria-label={`Nav ${i + 1}`} className="flex w-4 items-center justify-center border border-[#999]">
            <svg width="10" height="10" viewBox="0 0 10 10" fill="#888" stroke="#888"><path d={d} /></svg>
          </button>
        ))}
      </div>
      <button type="button" className="flex w-[47px] items-start justify-center pl-1"><Mixed text="模型" /></button>
      <button type="button" className="flex w-[60px] items-start justify-center border-x border-[#808080] bg-[#d3d3d3] whitespace-pre"><Mixed text="3D 视图" /></button>
      <button type="button" className="flex w-[84px] items-start justify-center border-r border-[#808080] bg-[#d3d3d3] pr-2 whitespace-pre"><Mixed text="运动算例 1" /></button>
    </div>
  );
}

function StatusBar() {
  return (
    <footer className="flex h-[18px] shrink-0 items-end bg-[#f7f7f7] pl-[2px] text-[12px] leading-[15px] whitespace-nowrap">
      <span>SOLIDWORKS Premium 2018 x64 版</span>
      <div className="mr-[198px] ml-auto flex">
        <span className="border-r border-[#c4c4c4] px-[6px]">欠定义</span>
        <span className="border-r border-[#c4c4c4] px-[4px]">大型装配体模式</span>
        <span className="pl-[4px]">在编辑 装配体</span>
      </div>
    </footer>
  );
}

function ImeBar() {
  return (
    <div className="absolute right-0 bottom-0 z-20 flex h-6 w-[182px] items-center border-t border-l border-[#c0c0c0] bg-white pl-1 text-[#1f73c7]">
      <svg width="30" height="30" viewBox="0 0 30 30" className="absolute -top-1 -left-[26px]" aria-label="S">
        <path d="M2 7l21-5 5 19-21 6z" fill="#ee5522" stroke="#ee5522" strokeWidth="2" strokeLinejoin="round" />
        <path d="M21 8c-5-2-11-1-11 3s11 2 10 6-7 4-12 2" fill="none" stroke="#fff" strokeWidth="3.6" />
      </svg>
      <button type="button" className="w-6 font-['Noto_Sans_CJK_SC',sans-serif] text-[15px] leading-none font-bold">中</button>
      <button type="button" aria-label="Punctuation" className="flex w-5 justify-center">
        <Svg size={16}>
          <circle cx="5" cy="7" r="2.5" stroke="currentColor" strokeWidth="1.7" />
          <path d="M12 10h5v4l-3 4h-2l2-4h-2z" fill="currentColor" />
        </Svg>
      </button>
      <button type="button" aria-label="Emoji" className="flex w-6 justify-center">
        <Svg size={18}>
          <circle cx="10" cy="10" r="8" stroke="currentColor" strokeWidth="1.7" />
          <path d="M7 6v3M13 6v3M5.500 11c1 5 8 5 9 0" stroke="currentColor" strokeWidth="1.7" />
        </Svg>
      </button>
      <button type="button" aria-label="Voice" className="flex w-5 justify-center">
        <Svg size={18}>
          <rect x="7" y="1" width="6" height="11" rx="3" fill="currentColor" />
          <path d="M4 8c0 9 12 9 12 0M10 15v4M6 19h8" stroke="currentColor" strokeWidth="1.8" />
        </Svg>
      </button>
      <button type="button" aria-label="Keyboard" className="flex w-6 justify-center">
        <Svg size={18}>
          <rect x="1" y="4" width="18" height="13" rx="1" fill="currentColor" />
          <path d="M3 7.500h14M3 10.500h14" stroke="#fff" strokeWidth="1.5" strokeDasharray="2 1" />
          <path d="M5 14h10" stroke="#fff" strokeWidth="1.5" />
        </Svg>
      </button>
      <button type="button" aria-label="Account" className="flex w-[22px] justify-center text-[#b9c4d8]">
        <Svg size={17}>
          <circle cx="8" cy="6" r="4" fill="currentColor" />
          <path d="M1 18c0-9 14-9 14 0z" fill="currentColor" />
          <path d="M12 11h6v7h-6z" fill="#dce2ec" stroke="currentColor" />
        </Svg>
      </button>
      <button type="button" aria-label="Skin" className="flex w-[22px] justify-center">
        <Svg size={17}><path d="M7 2c1 2 5 2 6 0l6 4-2 4-2-1v9H5V9l-2 1-2-4z" fill="currentColor" /></Svg>
      </button>
      <button type="button" aria-label="Tools" className="flex w-[22px] justify-center">
        <Svg size={17}>
          <path d="M2 2h7v7H2zM2 11h7v7H2zM11 11h7v7h-7z" fill="currentColor" />
          <path d="M12 3h5v5h-5z" stroke="currentColor" strokeWidth="1.6" />
        </Svg>
      </button>
    </div>
  );
}

export default function App() {
  return (
    <div className="relative flex h-screen flex-col overflow-hidden bg-[#f7f7f7] font-['Noto_Sans','Noto_Sans_CJK_SC',sans-serif] text-black">
      <TitleBar />
      <AddinBar />
      <Ribbon />
      <TabRow />
      <div className="flex min-h-0 flex-1">
        <FeaturePanel />
        <Viewport />
      </div>
      <BottomTabs />
      <StatusBar />
      <ImeBar />
      <div role="tooltip" className="absolute right-[78px] bottom-[33px] z-20 border border-[#b5b9c2] bg-white px-[9px] py-1 text-[12px] leading-5 whitespace-nowrap text-[#222] shadow">
        个性设置，点我看看
        <span className="absolute -bottom-1 left-2 size-[7px] rotate-45 border-r border-b border-[#b5b9c2] bg-white" />
      </div>
    </div>
  );
}
